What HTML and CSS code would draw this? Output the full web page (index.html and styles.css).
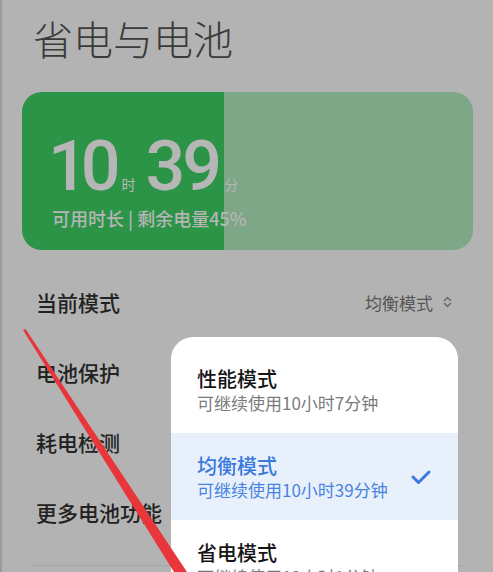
FILE: index.html
```html
<!DOCTYPE html>
<html lang="zh-CN">
<head>
    <meta charset="UTF-8">
    <meta name="viewport" content="width=device-width, initial-scale=1.0">
    <title>省电与电池</title>
    <link rel="stylesheet" href="styles.css">
</head>
<body>
    <div class="page">
        <h1 class="page-title">省电与电池</h1>

        <div class="battery-card">
            <div class="time-left">
                <span class="time-num num-hour">10</span><span class="time-unit unit-hour">时</span><span class="time-num num-min">39</span><span class="time-unit unit-min">分</span>
            </div>
            <div class="time-label">可用时长 | 剩余电量45%</div>
        </div>

        <div class="settings">
            <div class="setting-row">
                <span class="setting-name">当前模式</span>
                <span class="setting-value">均衡模式
                    <svg class="updown" width="9" height="14" viewBox="0 0 9 14">
                        <path d="M1.5 5.5 L4.5 2.5 L7.5 5.5 M1.5 8.5 L4.5 11.5 L7.5 8.5" fill="none" stroke="#6a6a6a" stroke-width="1.5" stroke-linecap="round" stroke-linejoin="round"/>
                    </svg>
                </span>
            </div>
            <div class="setting-row">
                <span class="setting-name">电池保护</span>
            </div>
            <div class="setting-row">
                <span class="setting-name">耗电检测</span>
            </div>
            <div class="setting-row">
                <span class="setting-name">更多电池功能</span>
            </div>
        </div>
        <div class="divider"></div>
    </div>

    <!-- mode picker popup -->
    <div class="mode-menu">
        <div class="mode-item">
            <div class="mode-text">
                <div class="mode-name">性能模式</div>
                <div class="mode-desc">可继续使用10小时7分钟</div>
            </div>
        </div>
        <div class="mode-item selected">
            <div class="mode-text">
                <div class="mode-name">均衡模式</div>
                <div class="mode-desc">可继续使用10小时39分钟</div>
            </div>
            <svg class="check" width="20" height="16" viewBox="0 0 20 16">
                <path d="M2 8 L7.5 13.5 L18 3" fill="none" stroke="#3b7be0" stroke-width="3" stroke-linecap="round" stroke-linejoin="round"/>
            </svg>
        </div>
        <div class="mode-item">
            <div class="mode-text">
                <div class="mode-name">省电模式</div>
                <div class="mode-desc">可继续使用12小时1分钟</div>
            </div>
        </div>
    </div>

    <!-- red annotation stroke -->
    <svg class="annotation" width="493" height="572" viewBox="0 0 493 572">
        <polygon points="23,330 25.5,329 187,572 174,572" fill="#e8363b"/>
    </svg>
</body>
</html>
```

FILE: styles.css
```css
html {
    background-color: #b3b3b3;
}
body {
    margin: 0;
    height: 572px;
    overflow: hidden;
    background-color: #b3b3b3;
    border-left: 2px solid #9b9b9b;
    font-family: "Noto Sans CJK SC", "Noto Sans", sans-serif;
    position: relative;
}
.page {
    padding-top: 14px;
}
.page-title {
    margin: 0 0 0 31px;
    font-size: 40px;
    font-weight: 300;
    line-height: 48px;
    color: #3b3b3b;
    height: 78px;
}
.battery-card {
    margin-left: 20px;
    width: 451px;
    height: 158px;
    box-sizing: border-box;
    padding: 39px 0 0 30px;
    border-radius: 20px;
    background: linear-gradient(to right, #2b9446 202px, #7da786 202px);
    color: #b6b6b6;
}
.time-left {
    height: 70px;
    line-height: 70px;
    white-space: nowrap;
}
.time-num {
    font-family: Roboto, "Noto Sans", sans-serif;
    font-size: 70px;
    font-weight: 500;
}
.num-hour {
    margin-left: -4px;
    letter-spacing: -7px;
}
.num-min {
    letter-spacing: -3px;
}
.time-unit {
    font-size: 14px;
}
.unit-hour {
    margin: 0 10px 0 8px;
}
.unit-min {
    margin-left: 5px;
}
.time-label {
    margin-top: 4px;
    font-size: 18px;
    line-height: 26px;
    font-weight: 500;
}
.settings {
    margin-top: 17px;
}
.setting-row {
    height: 70px;
    display: flex;
    align-items: center;
    justify-content: space-between;
    padding: 0 41px 0 34px;
}
.setting-name {
    font-size: 21px;
    font-weight: 500;
    color: #222222;
}
.setting-value {
    display: flex;
    align-items: center;
    font-size: 17px;
    color: #565656;
}
.updown {
    margin-left: 10px;
}
.divider {
    margin: 18px 0 0 31px;
    width: 430px;
    height: 1px;
    background-color: #a5a5a5;
}
.mode-menu {
    position: absolute;
    left: 169px;
    top: 337px;
    width: 287px;
    padding-top: 9px;
    background-color: #ffffff;
    border-radius: 22px;
    overflow: hidden;
}
.mode-item {
    height: 87px;
    display: flex;
    align-items: center;
    justify-content: space-between;
    padding: 0 27px 0 26px;
}
.mode-name {
    font-size: 20px;
    font-weight: 500;
    line-height: 26px;
    color: #151515;
}
.mode-desc {
    font-size: 17px;
    line-height: 22px;
    color: #7b7b7b;
}
.mode-item.selected {
    background-color: #e8f0fc;
}
.mode-item.selected .mode-name {
    color: #3a79dc;
}
.mode-item.selected .mode-desc {
    color: #4883e0;
}
.annotation {
    position: absolute;
    left: -2px;
    top: 0;
    pointer-events: none;
}
```
